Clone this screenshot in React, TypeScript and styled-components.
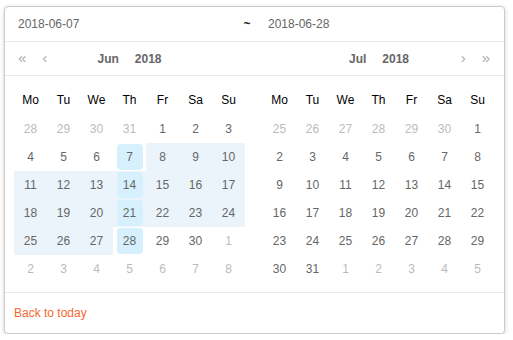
import { createGlobalStyle, styled } from "styled-components";

const GlobalStyle = createGlobalStyle`
  body {
    margin: 0;
    font-family: "Liberation Sans", Arial, sans-serif;
    background: #fff;
  }
`;

const Page = styled.div`
  padding: 6px 0 0 4px;
`;

const Panel = styled.div`
  width: 499px;
  border: 1px solid #ccc;
  border-radius: 4px;
  box-shadow: 0 1px 4px rgba(0, 0, 0, 0.18);
  background: #fff;
  font-size: 12px;
`;

const TopBar = styled.div`
  display: grid;
  grid-template-columns: 232px 20px 1fr;
  height: 34px;
  align-items: center;
  border-bottom: 1px solid #e9e9e9;
  color: #666;
`;

const DateInput = styled.div<{ $pad: number }>`
  padding-left: ${(p) => p.$pad}px;
`;

const Tilde = styled.div`
  text-align: center;
  color: #222;
  font-weight: bold;
`;

const Parts = styled.div`
  display: grid;
  grid-template-columns: 249px 1fr;
`;

const Part = styled.div``;

const Header = styled.div`
  display: grid;
  grid-template-columns: 1fr auto 1fr;
  align-items: center;
  height: 33px;
  border-bottom: 1px solid #e9e9e9;
`;

const NavGroup = styled.div<{ $side: "left" | "right" }>`
  display: flex;
  justify-content: ${(p) => (p.$side === "left" ? "flex-start" : "flex-end")};
  gap: 16px;
  padding: ${(p) => (p.$side === "left" ? "0 0 0 13px" : "0 14px 0 0")};
`;

const NavBtn = styled.span`
  color: #aaa;
  font-size: 15px;
  line-height: 1;
  margin-top: -2px;
`;

const Title = styled.div`
  display: flex;
  font-weight: bold;
  color: #666;
`;

const TitlePart = styled.span`
  padding: 0 8px;
`;

const Body = styled.div<{ $left: number }>`
  padding: 9px 0 9px ${(p) => p.$left}px;
  height: 198px;
`;

const Table = styled.table`
  border-collapse: collapse;
  table-layout: fixed;
  width: 231px;
`;

const WeekName = styled.th`
  width: 33px;
  height: 30px;
  padding: 0;
  font-weight: normal;
  color: #000;
  text-align: center;
`;

const Cell = styled.td<{ $inRange: boolean }>`
  height: 28px;
  padding: 0;
  text-align: center;
  background: ${(p) => (p.$inRange ? "#ebf4fa" : "transparent")};
`;

const DateBox = styled.div<{ $selected: boolean; $muted: boolean }>`
  width: 26px;
  height: 26px;
  line-height: 26px;
  margin: 0 auto;
  border-radius: 4px;
  color: ${(p) => (p.$muted ? "#bbb" : "#666")};
  background: ${(p) => (p.$selected ? "#d6f1fd" : "transparent")};
`;

const Footer = styled.div`
  height: 40px;
  display: flex;
  align-items: center;
  padding-left: 9px;
  border-top: 1px solid #e9e9e9;
`;

const TodayLink = styled.a`
  color: #f46830;
  text-decoration: none;
  cursor: pointer;
`;

type Day = { n: number; muted: boolean; inRange: boolean; selected: boolean };

const weekNames = ["Mo", "Tu", "We", "Th", "Fr", "Sa", "Su"];

function buildMonth(
  prevLast: number,
  lead: number,
  days: number,
  range?: boolean
): Day[][] {
  const cells: Day[] = [];
  for (let i = lead - 1; i >= 0; i--)
    cells.push({ n: prevLast - i, muted: true, inRange: false, selected: false });
  for (let d = 1; d <= days; d++) {
    const thursday = (lead + d - 1) % 7 === 3;
    cells.push({
      n: d,
      muted: false,
      inRange: !!range && d > 7 && d < 28,
      selected: !!range && thursday && d >= 7 && d <= 28,
    });
  }
  let next = 1;
  while (cells.length < 42)
    cells.push({ n: next++, muted: true, inRange: false, selected: false });
  const rows: Day[][] = [];
  for (let r = 0; r < 6; r++) rows.push(cells.slice(r * 7, r * 7 + 7));
  return rows;
}

function MonthTable({ rows }: { rows: Day[][] }) {
  return (
    <Table>
      <thead>
        <tr>
          {weekNames.map((w) => (
            <WeekName key={w}>{w}</WeekName>
          ))}
        </tr>
      </thead>
      <tbody>
        {rows.map((row, i) => (
          <tr key={i}>
            {row.map((d, j) => (
              <Cell key={j} $inRange={d.inRange}>
                <DateBox $selected={d.selected} $muted={d.muted}>
                  {d.n}
                </DateBox>
              </Cell>
            ))}
          </tr>
        ))}
      </tbody>
    </Table>
  );
}

export default function App() {
  const june = buildMonth(31, 4, 30, true);
  const july = buildMonth(30, 6, 31);
  return (
    <Page>
      <GlobalStyle />
      <Panel>
        <TopBar>
          <DateInput $pad={13}>2018-06-07</DateInput>
          <Tilde>~</Tilde>
          <DateInput $pad={11}>2018-06-28</DateInput>
        </TopBar>
        <Parts>
          <Part>
            <Header>
              <NavGroup $side="left">
                <NavBtn>«</NavBtn>
                <NavBtn>‹</NavBtn>
              </NavGroup>
              <Title>
                <TitlePart>Jun</TitlePart>
                <TitlePart>2018</TitlePart>
              </Title>
              <span />
            </Header>
            <Body $left={9}>
              <MonthTable rows={june} />
            </Body>
          </Part>
          <Part>
            <Header>
              <span />
              <Title>
                <TitlePart>Jul</TitlePart>
                <TitlePart>2018</TitlePart>
              </Title>
              <NavGroup $side="right">
                <NavBtn>›</NavBtn>
                <NavBtn>»</NavBtn>
              </NavGroup>
            </Header>
            <Body $left={9}>
              <MonthTable rows={july} />
            </Body>
          </Part>
        </Parts>
        <Footer>
          <TodayLink>Back to today</TodayLink>
        </Footer>
      </Panel>
    </Page>
  );
}
